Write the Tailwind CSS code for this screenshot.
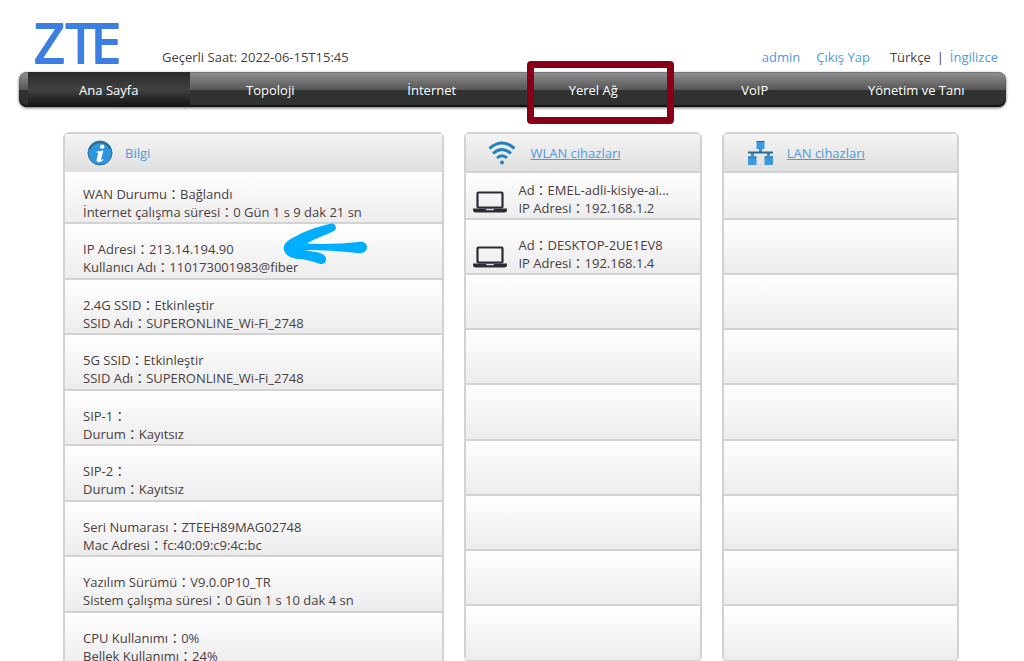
<!DOCTYPE html>
<html lang="tr">
<head>
    <meta charset="UTF-8">
    <meta name="viewport" content="width=device-width, initial-scale=1.0">
    <script src="https://cdn.jsdelivr.net/npm/@tailwindcss/browser@4"></script>
    <title>ZTE</title>
</head>
<body class="h-screen overflow-hidden bg-white font-['Open_Sans','Noto_Sans_CJK_JP',sans-serif] text-[13px] leading-[18px] text-[#4a4040]">
    <header class="flex h-[72px] items-end pl-[34px] pr-[26px]">
        <svg class="mb-1 h-12 w-[92px] overflow-visible" viewBox="0 0 92 48" role="img" aria-label="ZTE">
            <text y="43" x="0 32 57" font-family="Open Sans" font-size="54" fill="#3d7fe0" stroke="#3d7fe0" stroke-width="2" stroke-linejoin="round">ZTE</text>
        </svg>
        <p class="mb-1.5 ml-9">Geçerli Saat: 2022-06-15T15:45</p>
        <div class="mb-1.5 ml-auto flex">
            <a href="#" class="mr-4 text-[#4e9bdc]">admin</a>
            <a href="#" class="mr-5 text-[#4e9bdc]">Çıkış Yap</a>
            <span>Türkçe</span>
            <span class="mx-1.5">|</span>
            <a href="#" class="text-[#4e9bdc]">İngilizce</a>
        </div>
    </header>

    <nav class="ml-[19px] mr-[18px] rounded-lg bg-linear-to-b from-[#8c8c8c] from-5% via-[#555] via-52% to-[#303232] to-52% px-[9px] shadow-[0_1px_3px_#0009,inset_0_1px_0_#777,inset_0_-2px_1px_#111]">
        <ul class="flex h-[35px] text-white">
            <li class="flex-1 bg-linear-to-b from-[#2a2a2a] via-[#414141] to-[#141414]"><a href="#" class="flex h-full items-center justify-center">Ana Sayfa</a></li>
            <li class="flex-1"><a href="#" class="flex h-full items-center justify-center">Topoloji</a></li>
            <li class="flex-1"><a href="#" class="flex h-full items-center justify-center">İnternet</a></li>
            <li class="relative flex-1">
                <a href="#" class="flex h-full items-center justify-center">Yerel Ağ</a>
                <div class="pointer-events-none absolute -top-[11px] right-0 -bottom-[17px] left-3.5 rounded-sm border-[7px] border-[#870018]"></div>
            </li>
            <li class="flex-1"><a href="#" class="flex h-full items-center justify-center">VoIP</a></li>
            <li class="flex-1"><a href="#" class="flex h-full items-center justify-center">Yönetim ve Tanı</a></li>
        </ul>
    </nav>

    <main class="mt-[25px] grid grid-cols-[381fr_237fr_237fr] items-start gap-5 pl-[63px] pr-[65px]">
        <section class="rounded-md border-2 border-[#d2d2d2]">
            <h2 class="flex h-[38px] items-center bg-linear-to-b from-[#f4f4f4] to-[#dfdfdf] pl-[22px] text-[#4e9bdc]">
                <svg class="mr-3 size-[26px]" viewBox="0 0 26 26">
                    <circle cx="13" cy="13" r="12" fill="#2f96dc" stroke="#2a6f9e" stroke-width="1"/>
                    <path d="M3 9a11 11 0 0 1 20 0" fill="none" stroke="#28648c" stroke-width="1.5"/>
                    <circle cx="15.2" cy="6.6" r="2.2" fill="#fff"/>
                    <path d="M10 11.5l6.500-1-2.500 9q0 1 2-.5l.5.8q-2.500 2.700-5.500 2.300-2-.5-1.200-3l1.500-6.100h-1.500z" fill="#fff"/>
                </svg>
                Bilgi
            </h2>
            <ul>
                <li class="flex h-[52px] flex-col justify-end border-b-2 border-[#d2d2d2] bg-linear-to-b from-white to-[#ececec] pb-px pl-[18px]">
                    <p>WAN Durumu：Bağlandı</p>
                    <p>İnternet çalışma süresi：0 Gün 1 s 9 dak 21 sn</p>
                </li>
                <li class="relative flex h-14 flex-col justify-end border-b-2 border-[#d2d2d2] bg-linear-to-b from-white to-[#ececec] pb-0.5 pl-[18px]">
                    <p>IP Adresi：213.14.194.90</p>
                    <p>Kullanıcı Adı：110173001983@fiber</p>
                    <svg class="absolute -top-px left-[217px] h-[42px] w-[86px]" viewBox="0 0 86 42" fill="#00aeff">
                        <path d="M49 .6C52 0 55 3 53.500 6.500C51 10 37 13 25 20.500C40 21.500 60 21 76 19C81 18 85 20 85 24C85 29 80 31 75 30C58 28 40 27 23 27C29 29 36 28 42 32C46 35 44 42 38 41C33 39 29 38 19 36C7 36 0 30 2 23C4 17 13 14 20 10C30 6 39 3 49 .6Z"/>
                    </svg>
                </li>
                <li class="flex h-[55px] flex-col justify-end border-b-2 border-[#d2d2d2] bg-linear-to-b from-white to-[#ececec] pb-px pl-[18px]">
                    <p>2.4G SSID：Etkinleştir</p>
                    <p>SSID Adı：SUPERONLINE_Wi-Fi_2748</p>
                </li>
                <li class="flex h-14 flex-col justify-end border-b-2 border-[#d2d2d2] bg-linear-to-b from-white to-[#ececec] pb-0.5 pl-[18px]">
                    <p>5G SSID：Etkinleştir</p>
                    <p>SSID Adı：SUPERONLINE_Wi-Fi_2748</p>
                </li>
                <li class="flex h-[55px] flex-col justify-end border-b-2 border-[#d2d2d2] bg-linear-to-b from-white to-[#ececec] pb-px pl-[18px]">
                    <p>SIP-1：</p>
                    <p>Durum：Kayıtsız</p>
                </li>
                <li class="flex h-14 flex-col justify-end border-b-2 border-[#d2d2d2] bg-linear-to-b from-white to-[#ececec] pb-0.5 pl-[18px]">
                    <p>SIP-2：</p>
                    <p>Durum：Kayıtsız</p>
                </li>
                <li class="flex h-[55px] flex-col justify-end border-b-2 border-[#d2d2d2] bg-linear-to-b from-white to-[#ececec] pb-px pl-[18px]">
                    <p>Seri Numarası：ZTEEH89MAG02748</p>
                    <p>Mac Adresi：fc:40:09:c9:4c:bc</p>
                </li>
                <li class="flex h-14 flex-col justify-end border-b-2 border-[#d2d2d2] bg-linear-to-b from-white to-[#ececec] pb-0.5 pl-[18px]">
                    <p>Yazılım Sürümü：V9.0.0P10_TR</p>
                    <p>Sistem çalışma süresi：0 Gün 1 s 10 dak 4 sn</p>
                </li>
                <li class="flex h-[55px] flex-col justify-end border-b-2 border-[#d2d2d2] bg-linear-to-b from-white to-[#ececec] pb-px pl-[18px]">
                    <p>CPU Kullanımı：0%</p>
                    <p>Bellek Kullanımı：24%</p>
                </li>
            </ul>
        </section>

        <section class="rounded-md border-2 border-[#d2d2d2]">
            <h2 class="flex h-[39px] items-center border-b-2 border-[#d2d2d2] bg-linear-to-b from-[#f4f4f4] to-[#dfdfdf] pl-[22px]">
                <svg class="mr-3.5 h-6 w-7" viewBox="0 0 28 24" fill="none" stroke="#2381bd" stroke-width="3">
                    <path d="M1.500 7.500Q14-3.500 26.500 7.500"/>
                    <path d="M5 12.500Q14 4.500 23 12.500"/>
                    <path d="M9 17Q14 12.500 19 17"/>
                    <circle cx="14" cy="21.500" r="2" fill="#2381bd" stroke="none"/>
                </svg>
                <a href="#" class="text-[#4e9bdc] underline">WLAN cihazları</a>
            </h2>
            <ul>
                <li class="flex h-[47px] items-end border-b-2 border-[#d2d2d2] bg-linear-to-b from-white to-[#ececec] pb-px pl-[7px]">
                    <svg class="mr-[11px] mb-1 h-[22px] w-[34px]" viewBox="0 0 34 22">
                        <rect x="4.500" y="1.500" width="25" height="15" rx="1" fill="none" stroke="#2b2b35" stroke-width="2.200"/>
                        <path d="M0 17.500h34v1.500q0 2.500-3 2.500H3q-3 0-3-2.500z" fill="#2b2b35"/>
                        <path d="M13 18h8l-.5 1.300h-7z" fill="#ddd"/>
                    </svg>
                    <div>
                        <p>Ad：EMEL-adli-kisiye-ai...</p>
                        <p>IP Adresi：192.168.1.2</p>
                    </div>
                </li>
                <li class="flex h-[55px] items-end border-b-2 border-[#d2d2d2] bg-linear-to-b from-white to-[#ececec] pb-px pl-[7px]">
                    <svg class="mr-[11px] mb-1 h-[22px] w-[34px]" viewBox="0 0 34 22">
                        <rect x="4.500" y="1.500" width="25" height="15" rx="1" fill="none" stroke="#2b2b35" stroke-width="2.200"/>
                        <path d="M0 17.500h34v1.500q0 2.500-3 2.500H3q-3 0-3-2.500z" fill="#2b2b35"/>
                        <path d="M13 18h8l-.5 1.300h-7z" fill="#ddd"/>
                    </svg>
                    <div>
                        <p>Ad：DESKTOP-2UE1EV8</p>
                        <p>IP Adresi：192.168.1.4</p>
                    </div>
                </li>
                <li class="h-[55px] border-b-2 border-[#d2d2d2] bg-linear-to-b from-white to-[#ececec]"></li>
                <li class="h-[55px] border-b-2 border-[#d2d2d2] bg-linear-to-b from-white to-[#ececec]"></li>
                <li class="h-14 border-b-2 border-[#d2d2d2] bg-linear-to-b from-white to-[#ececec]"></li>
                <li class="h-[55px] border-b-2 border-[#d2d2d2] bg-linear-to-b from-white to-[#ececec]"></li>
                <li class="h-[55px] border-b-2 border-[#d2d2d2] bg-linear-to-b from-white to-[#ececec]"></li>
                <li class="h-[55px] border-b-2 border-[#d2d2d2] bg-linear-to-b from-white to-[#ececec]"></li>
                <li class="h-[54px] bg-linear-to-b from-white to-[#ececec]"></li>
            </ul>
        </section>

        <section class="rounded-md border-2 border-[#d2d2d2]">
            <h2 class="flex h-[39px] items-center border-b-2 border-[#d2d2d2] bg-linear-to-b from-[#f4f4f4] to-[#dfdfdf] pl-6">
                <svg class="mr-3.5 h-6 w-[25px]" viewBox="0 0 25 24">
                    <path d="M12.500 8v3.500M4.500 15v-3.500M20.500 15v-3.500" stroke="#2f8fd2" stroke-width="3"/>
                    <path d="M0 11.500h25" stroke="#286a96" stroke-width="2"/>
                    <path d="M8.500 0h8v8h-8zM0 15.500h8.500v8.500H0zM16.500 15.500H25v8.500h-8.500z" fill="#3a9ae0"/>
                    <path d="M8.500.5h8M0 16h8.500M16.500 16H25" stroke="#286a96"/>
                </svg>
                <a href="#" class="text-[#4e9bdc] underline">LAN cihazları</a>
            </h2>
            <ul>
                <li class="h-[47px] border-b-2 border-[#d2d2d2] bg-linear-to-b from-white to-[#ececec]"></li>
                <li class="h-[55px] border-b-2 border-[#d2d2d2] bg-linear-to-b from-white to-[#ececec]"></li>
                <li class="h-[55px] border-b-2 border-[#d2d2d2] bg-linear-to-b from-white to-[#ececec]"></li>
                <li class="h-[55px] border-b-2 border-[#d2d2d2] bg-linear-to-b from-white to-[#ececec]"></li>
                <li class="h-14 border-b-2 border-[#d2d2d2] bg-linear-to-b from-white to-[#ececec]"></li>
                <li class="h-[55px] border-b-2 border-[#d2d2d2] bg-linear-to-b from-white to-[#ececec]"></li>
                <li class="h-[55px] border-b-2 border-[#d2d2d2] bg-linear-to-b from-white to-[#ececec]"></li>
                <li class="h-[55px] border-b-2 border-[#d2d2d2] bg-linear-to-b from-white to-[#ececec]"></li>
                <li class="h-[54px] bg-linear-to-b from-white to-[#ececec]"></li>
            </ul>
        </section>
    </main>
</body>
</html>
